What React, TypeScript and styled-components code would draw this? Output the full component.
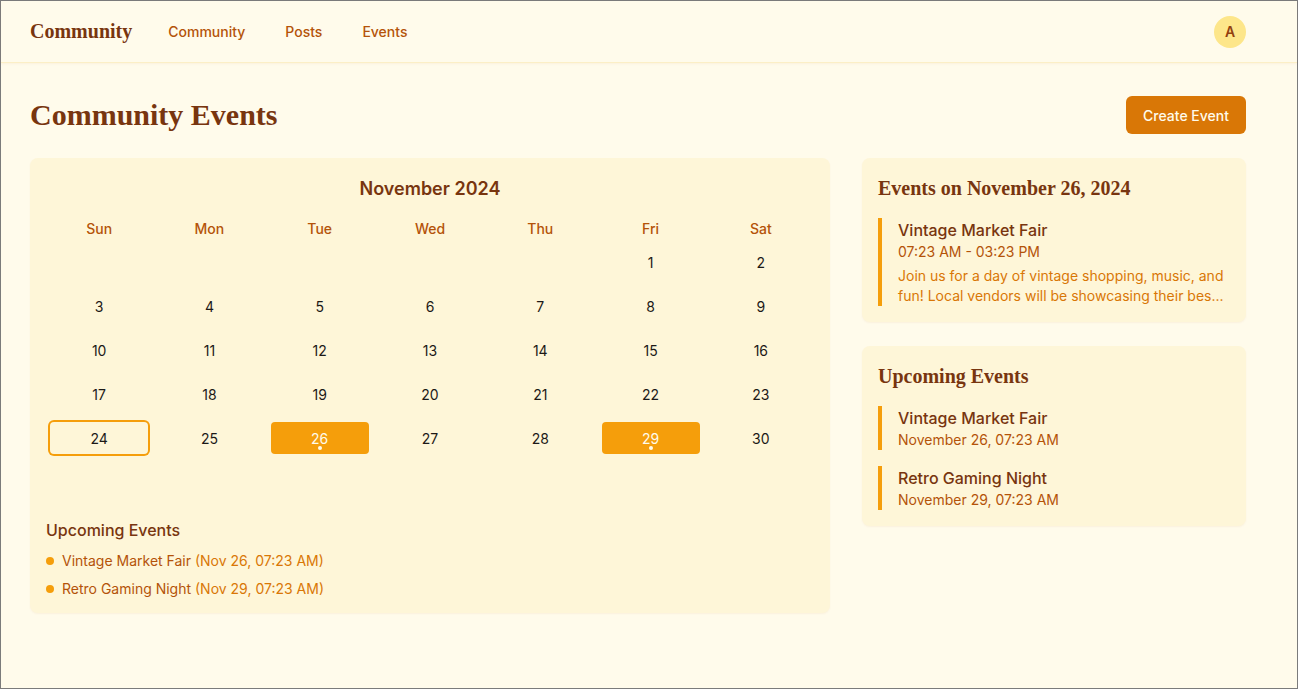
import React from "react";
import styled, { createGlobalStyle } from "styled-components";

const GlobalStyle = createGlobalStyle`
  * { box-sizing: border-box; }
  html, body { margin: 0; padding: 0; }
  body {
    background: #fffbeb;
    font-family: Inter, "Noto Sans", sans-serif;
    color: #1c1917;
  }
`;

const Frame = styled.div`
  min-height: 100vh;
  border: 1px solid #7b7b7b;
  background: #fffbeb;
`;

const Header = styled.header`
  height: 62px;
  border-bottom: 1px solid #fcefc6;
  box-shadow: 0 1px 2px rgba(180, 83, 9, 0.06);
`;

const Container = styled.div`
  width: 1216px;
  margin-left: 29px;
`;

const HeaderInner = styled(Container)`
  height: 100%;
  display: flex;
  align-items: center;
`;

const Logo = styled.div`
  font-family: "Liberation Serif", serif;
  font-weight: 700;
  font-size: 20px;
  color: #78350f;
`;

const Nav = styled.nav`
  display: flex;
  gap: 40px;
  margin-left: 36px;
`;

const NavLink = styled.a`
  font-size: 14px;
  font-weight: 500;
  color: #b45309;
  text-decoration: none;
`;

const Avatar = styled.div`
  margin-left: auto;
  width: 32px;
  height: 32px;
  border-radius: 50%;
  background: #fde68a;
  color: #92400e;
  font-size: 14px;
  font-weight: 600;
  display: flex;
  align-items: center;
  justify-content: center;
`;

const Main = styled(Container)`
  padding-top: 33px;
`;

const TitleRow = styled.div`
  display: flex;
  align-items: center;
  justify-content: space-between;
  margin-bottom: 24px;
`;

const PageTitle = styled.h1`
  margin: 0;
  font-family: "Liberation Serif", serif;
  font-weight: 700;
  font-size: 30px;
  line-height: 38px;
  color: #78350f;
`;

const PrimaryButton = styled.button`
  border: none;
  background: #d97706;
  color: #fffbeb;
  font-family: Inter, sans-serif;
  font-size: 14px;
  font-weight: 500;
  height: 38px;
  padding: 0 17px;
  border-radius: 6px;
`;

const Layout = styled.div`
  display: grid;
  grid-template-columns: 800px 384px;
  gap: 32px;
  align-items: start;
`;

const Card = styled.section`
  background: #fef6d8;
  border-radius: 8px;
  padding: 16px;
  box-shadow: 0 1px 2px rgba(180, 83, 9, 0.06);
`;

const CalendarCard = styled(Card)`
  padding-top: 17px;
  padding-bottom: 14px;
`;

const MonthTitle = styled.h2`
  margin: 0 0 16px;
  text-align: center;
  font-size: 18px;
  line-height: 28px;
  font-weight: 600;
  color: #78350f;
`;

const WeekGrid = styled.div`
  display: grid;
  grid-template-columns: repeat(7, 1fr);
  column-gap: 8px;
  row-gap: 12px;
  padding: 0 2px;
`;

const DayName = styled.div`
  text-align: center;
  font-size: 14px;
  line-height: 20px;
  font-weight: 500;
  color: #b45309;
  margin-bottom: -5px;
`;

const DayCell = styled.div<{ $today?: boolean; $event?: boolean }>`
  position: relative;
  justify-self: center;
  width: 98px;
  height: 32px;
  display: flex;
  align-items: center;
  justify-content: center;
  font-size: 14px;
  border-radius: 4px;
  color: ${(p) => (p.$event ? "#fffbeb" : "#1c1917")};
  background: ${(p) => (p.$event ? "#f59e0b" : "transparent")};
  box-shadow: ${(p) => (p.$today ? "0 0 0 2px #f59e0b" : "none")};
`;

const EventDot = styled.span`
  position: absolute;
  bottom: 4px;
  left: 50%;
  width: 4px;
  height: 4px;
  margin-left: -2px;
  border-radius: 50%;
  background: #fffbeb;
`;

const ListSection = styled.div`
  margin-top: 20px;
`;

const ListTitle = styled.h3`
  margin: 0 0 9px;
  font-size: 16px;
  line-height: 24px;
  font-weight: 500;
  color: #78350f;
`;

const List = styled.ul`
  list-style: none;
  margin: 0;
  padding: 0;
  display: flex;
  flex-direction: column;
  gap: 8px;
`;

const ListItem = styled.li`
  display: flex;
  align-items: center;
  gap: 8px;
  font-size: 14px;
  line-height: 20px;
  color: #b45309;
`;

const Bullet = styled.span`
  width: 8px;
  height: 8px;
  border-radius: 50%;
  background: #f59e0b;
`;

const Muted = styled.span`
  color: #d97706;
`;

const Side = styled.div`
  display: flex;
  flex-direction: column;
  gap: 24px;
`;

const SideTitle = styled.h2`
  margin: 0 0 16px;
  font-family: "Liberation Serif", serif;
  font-weight: 700;
  font-size: 20px;
  line-height: 28px;
  color: #78350f;
`;

const EventStack = styled.div`
  display: flex;
  flex-direction: column;
  gap: 16px;
`;

const EventBlock = styled.div`
  border-left: 4px solid #f59e0b;
  padding-left: 16px;
`;

const EventName = styled.div`
  font-size: 16px;
  line-height: 24px;
  font-weight: 500;
  color: #78350f;
`;

const EventTime = styled.div`
  font-size: 14px;
  line-height: 20px;
  color: #b45309;
`;

const EventDesc = styled.p`
  margin: 4px 0 0;
  font-size: 14px;
  line-height: 20px;
  color: #d97706;
`;

const dayNames = ["Sun", "Mon", "Tue", "Wed", "Thu", "Fri", "Sat"];

const fullDescription =
  "Join us for a day of vintage shopping, music, and fun! Local vendors will be showcasing their best vintage finds.";
const shortDescription = fullDescription.substring(0, 97) + "...";

export default function App() {
  const cells: (number | null)[] = [];
  for (let i = 0; i < 5; i++) cells.push(null);
  for (let d = 1; d <= 30; d++) cells.push(d);
  while (cells.length < 42) cells.push(null);
  const eventDays = [26, 29];

  return (
    <>
      <GlobalStyle />
      <Frame>
        <Header>
          <HeaderInner>
            <Logo>Community</Logo>
            <Nav>
              <NavLink href="#">Community</NavLink>
              <NavLink href="#">Posts</NavLink>
              <NavLink href="#">Events</NavLink>
            </Nav>
            <Avatar>A</Avatar>
          </HeaderInner>
        </Header>
        <Main>
          <TitleRow>
            <PageTitle>Community Events</PageTitle>
            <PrimaryButton>Create Event</PrimaryButton>
          </TitleRow>
          <Layout>
            <CalendarCard>
              <MonthTitle>November 2024</MonthTitle>
              <WeekGrid>
                {dayNames.map((n) => (
                  <DayName key={n}>{n}</DayName>
                ))}
                {cells.map((d, i) => (
                  <DayCell
                    key={i}
                    $today={d === 24}
                    $event={d !== null && eventDays.includes(d)}
                  >
                    {d}
                    {d !== null && eventDays.includes(d) && <EventDot />}
                  </DayCell>
                ))}
              </WeekGrid>
              <ListSection>
                <ListTitle>Upcoming Events</ListTitle>
                <List>
                  <ListItem>
                    <Bullet />
                    <span>
                      Vintage Market Fair <Muted>(Nov 26, 07:23 AM)</Muted>
                    </span>
                  </ListItem>
                  <ListItem>
                    <Bullet />
                    <span>
                      Retro Gaming Night <Muted>(Nov 29, 07:23 AM)</Muted>
                    </span>
                  </ListItem>
                </List>
              </ListSection>
            </CalendarCard>
            <Side>
              <Card>
                <SideTitle>Events on November 26, 2024</SideTitle>
                <EventBlock>
                  <EventName>Vintage Market Fair</EventName>
                  <EventTime>07:23 AM - 03:23 PM</EventTime>
                  <EventDesc>{shortDescription}</EventDesc>
                </EventBlock>
              </Card>
              <Card>
                <SideTitle>Upcoming Events</SideTitle>
                <EventStack>
                  <EventBlock>
                    <EventName>Vintage Market Fair</EventName>
                    <EventTime>November 26, 07:23 AM</EventTime>
                  </EventBlock>
                  <EventBlock>
                    <EventName>Retro Gaming Night</EventName>
                    <EventTime>November 29, 07:23 AM</EventTime>
                  </EventBlock>
                </EventStack>
              </Card>
            </Side>
          </Layout>
        </Main>
      </Frame>
    </>
  );
}
